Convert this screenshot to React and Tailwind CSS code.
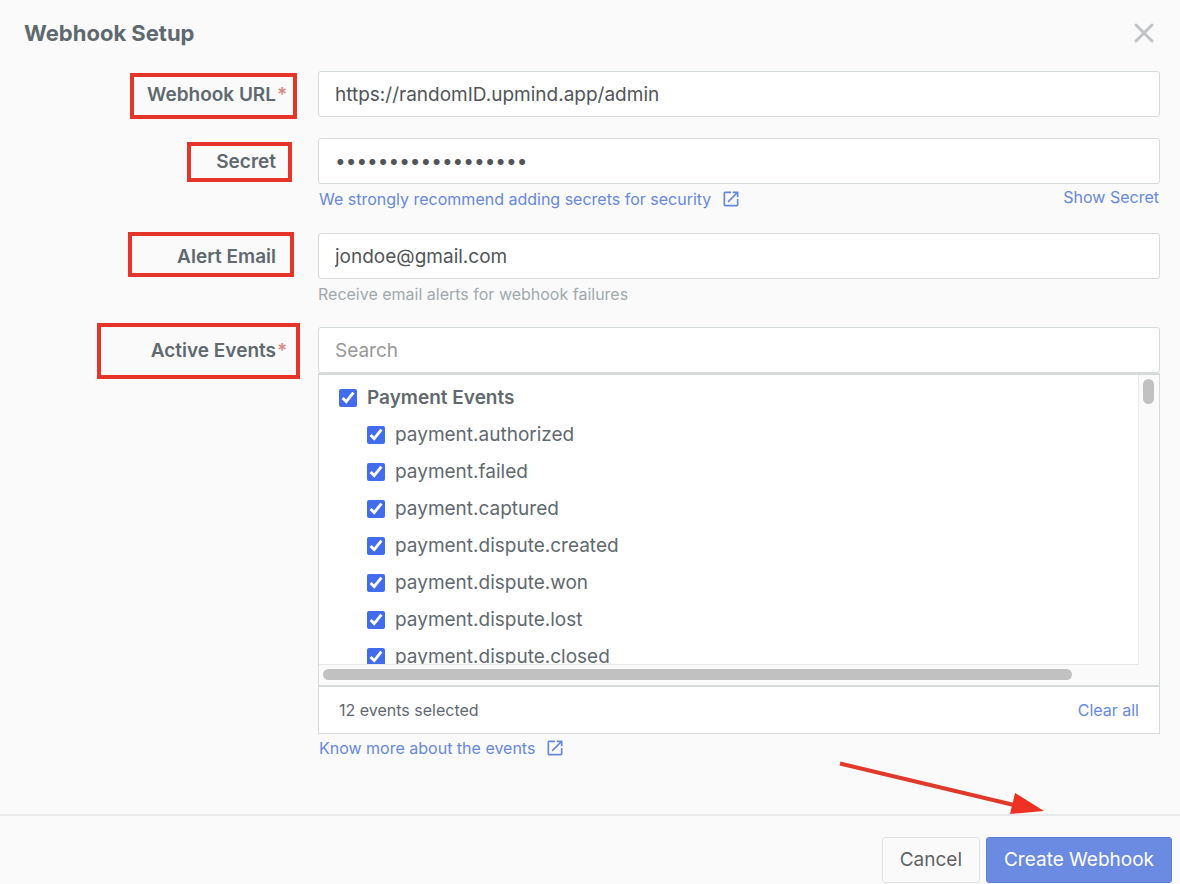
import { useState } from 'react'
import { X } from 'lucide-react'
import { MdOpenInNew } from 'react-icons/md'

const events = [
  'payment.authorized',
  'payment.failed',
  'payment.captured',
  'payment.dispute.created',
  'payment.dispute.won',
  'payment.dispute.lost',
  'payment.dispute.closed',
]

const inputClass =
  'block w-full h-[46px] px-4 bg-white border border-[#d5dadb] rounded-[3px] text-[19px] text-[#515558] placeholder-[#999999] outline-none'

function Field({ id, label, required, markClass, children }) {
  return (
    <div className="flex items-start">
      <div className="relative w-[318px] shrink-0 h-[46px] flex items-center justify-end pt-0.5 pr-[42px]">
        <label htmlFor={id} className="relative text-[19px] font-semibold text-[#5f696f]">
          {label}
          {required && <span className="absolute left-full top-0 pl-px text-[#d98a88]">*</span>}
        </label>
        <span className={`absolute border-4 border-[#e5352a] pointer-events-none ${markClass}`} />
      </div>
      <div className="flex-1 min-w-0">{children}</div>
    </div>
  )
}

function DocLink({ children }) {
  return (
    <a href="#docs" className="inline-flex items-center gap-2.5 pl-px text-[16px] leading-6 text-[#6788de]">
      {children}
      <MdOpenInNew size={20} />
    </a>
  )
}

function Check({ id, label, checked, onChange, className = '' }) {
  return (
    <label htmlFor={id} className={`flex items-center gap-[10px] h-[37px] shrink-0 text-[19px] text-[#5f696f] ${className}`}>
      <input id={id} type="checkbox" checked={checked} onChange={onChange} className="size-[18px] accent-[#426cec]" />
      <span className="pt-0.5">{label}</span>
    </label>
  )
}

export default function WebhookSetup() {
  const [selected, setSelected] = useState(events)

  const toggle = (name) =>
    setSelected((prev) => (prev.includes(name) ? prev.filter((e) => e !== name) : [...prev, name]))
  const allChecked = selected.length === events.length

  return (
    <div className="min-h-screen flex flex-col bg-[#fafafa] font-['Inter',sans-serif]">
      <header className="flex items-center justify-between h-[71px] pb-1.5 pl-6 pr-5">
        <h1 className="pt-0.5 text-[22px] font-bold text-[#5f696f]">Webhook Setup</h1>
        <button type="button" aria-label="Close" className="text-[#c1c3c4]">
          <X size={32} strokeWidth={2.25} />
        </button>
      </header>

      <form className="flex flex-col pr-5 pb-[54px]">
        <Field id="url" label="Webhook URL" required markClass="left-[130px] right-[21px] top-0.5 h-[46px]">
          <input id="url" type="text" defaultValue="https://randomID.upmind.app/admin" className={inputClass} />
        </Field>

        <div className="mt-[21px]">
          <Field id="secret" label="Secret" markClass="left-[187px] right-[26px] top-1 h-10">
            <input id="secret" type="password" defaultValue="abcdefghijklmnopqr" className={inputClass} />
            <div className="flex justify-between items-start pt-[3px]">
              <DocLink>We strongly recommend adding secrets for security</DocLink>
              <button type="button" className="pr-px text-[16px] leading-5 text-[#6788de]">Show Secret</button>
            </div>
          </Field>
        </div>

        <div className="mt-[22px]">
          <Field id="email" label="Alert Email" markClass="left-32 right-6 -top-px h-[45px]">
            <input id="email" type="email" defaultValue="jondoe@gmail.com" className={inputClass} />
            <p className="pt-[3px] text-[16px] leading-6 text-[#a1a9ad]">Receive email alerts for webhook failures</p>
          </Field>
        </div>

        <div className="mt-[21px]">
          <Field id="search" label="Active Events" required markClass="left-[97px] right-[18px] -top-1 h-14">
            <input id="search" type="text" placeholder="Search" className={inputClass} />
            <div className="border-x border-t-2 border-[#d5dadb]">
              <div className="flex">
                <div className="flex-1 h-[290px] flex flex-col overflow-hidden pl-5 pt-1 bg-white border-r border-b border-[#e6e8e9]">
                  <Check
                    id="all"
                    label="Payment Events"
                    className="font-semibold"
                    checked={allChecked}
                    onChange={() => setSelected(allChecked ? [] : events)}
                  />
                  {events.map((name) => (
                    <Check
                      key={name}
                      id={name}
                      label={name}
                      className="pl-7"
                      checked={selected.includes(name)}
                      onChange={() => toggle(name)}
                    />
                  ))}
                </div>
                <div className="w-5 p-1">
                  <div className="w-[11px] h-[25px] rounded-full bg-[#c1c1c1]" />
                </div>
              </div>
              <div className="h-5 px-1 pt-1">
                <div className="w-[90%] h-[11px] rounded-full bg-[#c1c1c1]" />
              </div>
            </div>
            <div className="flex items-center justify-between h-[49px] px-5 bg-white border border-t-2 border-[#d5dadb]">
              <span className="text-[16px] text-[#5f696f]">12 events selected</span>
              <button type="button" onClick={() => setSelected([])} className="text-[16px] text-[#6788de]">Clear all</button>
            </div>
            <div className="pt-0.5">
              <DocLink>Know more about the events</DocLink>
            </div>
          </Field>
        </div>
      </form>

      <footer className="relative flex justify-end gap-1.5 pt-[21px] pr-2 border-t-2 border-[#e7e9ea]">
        <svg className="absolute right-[136px] -top-14 pointer-events-none" width="206" height="56" viewBox="0 0 206 56">
          <path d="M2 3.500L176 45" stroke="#e03a2c" strokeWidth="4" />
          <path d="M177 33L206 51L172 54Z" fill="#ee3123" />
        </svg>
        <button type="button" className="h-[46px] px-[17px] border border-[#dfe2e3] rounded-[3px] text-[19px] text-[#5f6366]">Cancel</button>
        <button type="submit" className="h-[46px] px-[17px] bg-[#6b8be3] border border-[#5c7cd6] rounded-[3px] text-[19px] text-white">Create Webhook</button>
      </footer>
    </div>
  )
}
